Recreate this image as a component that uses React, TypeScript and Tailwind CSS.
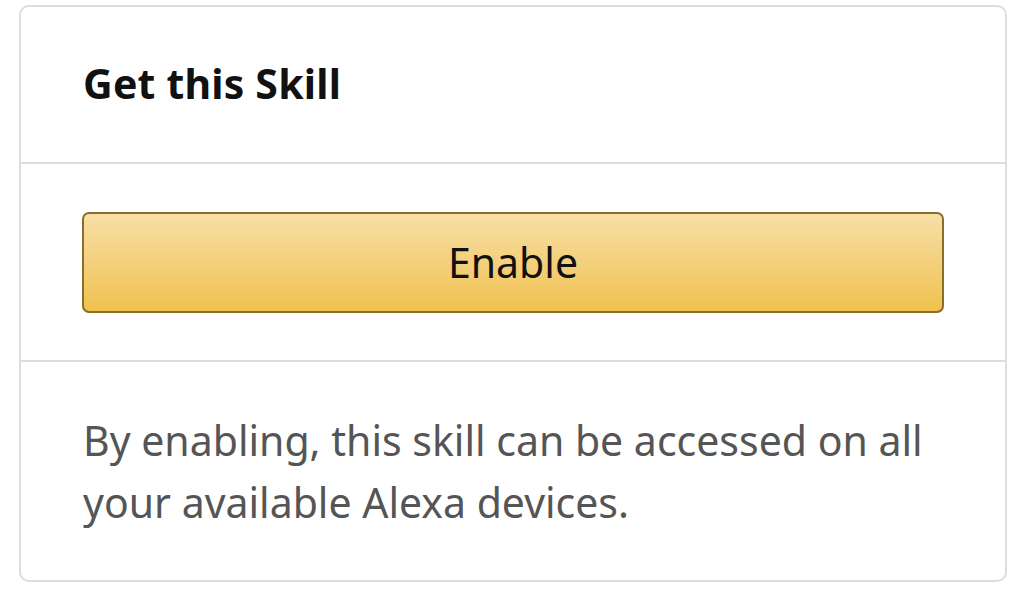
export default function App() {
  return (
    <div className="min-h-screen bg-white pt-[5px] pl-[19px] pr-[5px]" style={{ fontFamily: '"Noto Sans", "Open Sans", sans-serif' }}>
      <div className="w-[988px] h-[577px] rounded-[10px] border-2 border-[#dddddd] bg-white flex flex-col overflow-hidden">
        <div className="h-[157px] flex items-center px-[62px] border-b-2 border-[#dddddd]">
          <h2 className="text-[41px] font-bold text-[#111111] leading-none pb-[2px] tracking-[0.2px]">Get this Skill</h2>
        </div>
        <div className="h-[198px] flex items-center px-[61px] border-b-2 border-[#dddddd]">
          <button className="w-full h-[101px] rounded-[7px] border-[2.5px] border-[#8a6e2b] bg-gradient-to-b from-[#f7dfa5] to-[#f0c14b] text-[41px] text-[#111111] leading-none">
            Enable
          </button>
        </div>
        <div className="flex-1 px-[62px] pt-[47px]">
          <p className="text-[41px] leading-[62px] text-[#555555]">
            By enabling, this skill can be accessed on all your available Alexa devices.
          </p>
        </div>
      </div>
    </div>
  );
}
